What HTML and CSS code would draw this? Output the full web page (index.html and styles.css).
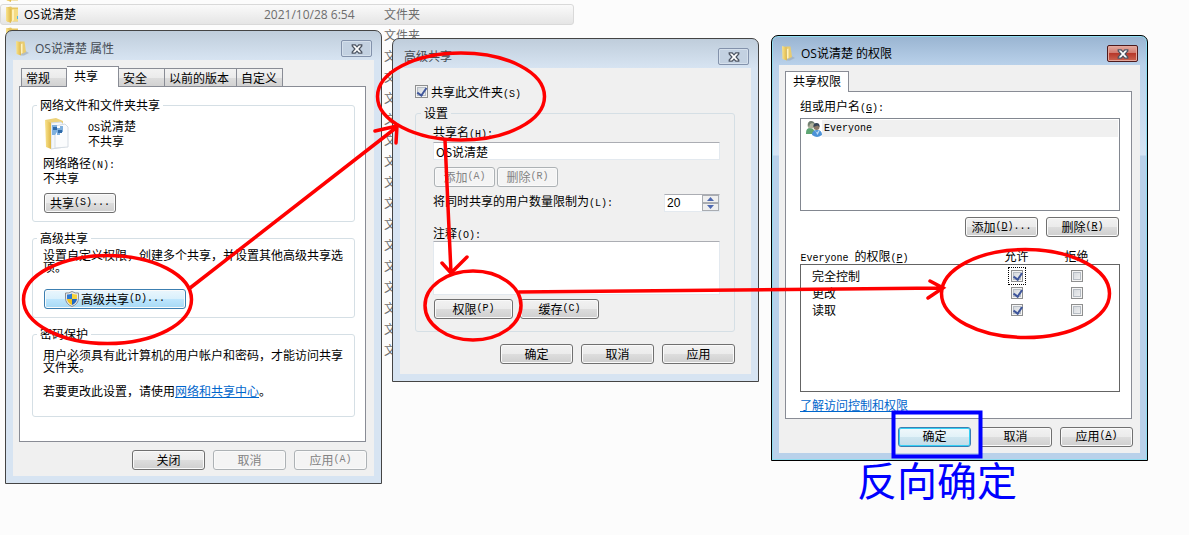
FILE: index.html
```
<!DOCTYPE html>
<html lang="zh-CN">
  <head>
    <meta charset="UTF-8" />
    <meta name="viewport" content="width=device-width, initial-scale=1.0" />
    <title>OS说清楚 共享</title>
    <link rel="stylesheet" href="styles.css">
  </head>
  <body>
    <!-- 图标定义 -->
    <svg class="defs" width="0" height="0">
      <defs>
        <linearGradient id="gold" x1="0" x2="1">
          <stop offset="0" stop-color="#f9e48f" />
          <stop offset="1" stop-color="#dfb645" />
        </linearGradient>
        <symbol id="folder" viewBox="0 0 14 17">
          <path d="M1 1.5l5-1 1 1h6v14H2z" fill="#e6c560" />
          <path d="M7 3h6v12H7z" fill="#f5dc83" />
          <path d="M1 1.5L6 3v14l-5-2z" fill="url(#gold)" />
          <path d="M7 4l2-.5V14l-2 2z" fill="#fff1ba" />
          <path d="M12 10h1v3h-1z" fill="#55b5e5" />
        </symbol>
        <symbol id="folder-small" viewBox="0 0 14 16">
          <path d="M7 9l7 4-5 2.500H6z" fill="#9aa7b3" opacity=".6" />
          <path d="M5 1.500h4.500L11 12l-4 2z" fill="#e9cc70" />
          <path d="M1 1l4.500 1L6 15.500 1.500 14z" fill="url(#gold)" />
          <path d="M6 4l1.500-.5v9L6 14z" fill="#fff3c0" />
        </symbol>
        <symbol id="cross" viewBox="1 1 10 8">
          <path d="M2 1.500h2.500L6 3.200l1.500-1.700H10v1L7.700 5 10 7.500v1H7.500L6 6.800 4.500 8.500H2v-1L4.300 5 2 2.500z" fill="#fff" stroke="#4a5260" />
        </symbol>
      </defs>
    </svg>

    <div class="desktop">
      <!-- 资源管理器文件列表 -->
      <ul class="files">
        <li><svg><use href="#folder" /></svg></li>
        <li class="selected"><svg><use href="#folder" /></svg><span class="name">OS说清楚</span><span class="date">2021/10/28 6:54</span><span>文件夹</span></li>
        <li><svg><use href="#folder" /></svg><span class="name"></span><span class="date"></span><span>文件夹</span></li>
        <li><span class="name"></span><span class="date"></span><span>文件夹</span></li>
        <li><span class="name"></span><span class="date"></span><span>文件夹</span></li>
        <li><span class="name"></span><span class="date"></span><span>文件夹</span></li>
        <li><span class="name"></span><span class="date"></span><span>文件夹</span></li>
        <li><span class="name"></span><span class="date"></span><span>文件夹</span></li>
        <li><span class="name"></span><span class="date"></span><span>文件夹</span></li>
        <li><span class="name"></span><span class="date"></span><span>文件夹</span></li>
        <li><span class="name"></span><span class="date"></span><span>文件夹</span></li>
        <li><span class="name"></span><span class="date"></span><span>文件夹</span></li>
        <li><span class="name"></span><span class="date"></span><span>文件夹</span></li>
        <li><span class="name"></span><span class="date"></span><span>文件夹</span></li>
        <li><span class="name"></span><span class="date"></span><span>文件夹</span></li>
        <li><span class="name"></span><span class="date"></span><span>文件夹</span></li>
        <li><span class="name"></span><span class="date"></span><span>文件夹</span></li>
        <li><span class="name"></span><span class="date"></span><span>文件夹</span></li>
      </ul>

      <!-- 属性窗口 -->
      <section class="window win-props">
        <header class="titlebar">
          <svg class="title-icon"><use href="#folder-small" /></svg>
          <h2>OS说清楚 属性</h2>
          <button class="close" aria-label="关闭窗口"><svg><use href="#cross" /></svg></button>
        </header>
        <div class="content">
          <nav class="tabs">
            <button>常规</button>
            <button class="active">共享</button>
            <button>安全</button>
            <button class="wide">以前的版本</button>
            <button>自定义</button>
          </nav>
          <div class="panel">
            <fieldset class="network">
              <legend>网络文件和文件夹共享</legend>
              <div class="folder-info">
                <svg viewBox="0 0 26 32">
                  <path d="M1 2l11-2 7 3v24H4z" fill="#ecd27a" />
                  <path d="M7 5l10-1 4 4v21L7 31z" fill="#f4f7fa" stroke="#d3dbe2" />
                  <path d="M11 8l10-2 3 3v20l-13 1z" fill="#fbfcfd" stroke="#d5dce3" />
                  <path d="M8 7h5v3h3v-2h3v6h-3v3h-3v-3l-2 3H8z" fill="#7fb0de" />
                  <path d="M9 9h4v3H9zM14 12h4v3h-4z" fill="#2f6aa8" />
                  <path d="M1 2l6 3v26l-5-2z" fill="url(#gold)" />
                </svg>
                <p><span class="ascii">OS</span>说清楚<br />不共享</p>
              </div>
              <p>网络路径<span class="ascii">(N):</span><br />不共享</p>
              <button class="btn">共享<span class="ascii">(S)...</span></button>
            </fieldset>
            <fieldset class="advanced">
              <legend>高级共享</legend>
              <p class="dense">设置自定义权限，创建多个共享，并设置其他高级共享选项。</p>
              <button class="btn hot">
                <svg viewBox="0 0 14 16">
                  <path d="M7 .5Q10 2.500 13.500 2v5q0 6-6.500 8.500Q.5 13 .5 7V2Q4 2.500 7 .5z" fill="#e8eaec" stroke="#8b8f95" />
                  <path d="M7 2.500V8H2V3.500q3 .2 5-1z" fill="#2c79d1" />
                  <path d="M7 2.500V8h5V3.500q-3 .2-5-1z" fill="#f6d23a" />
                  <path d="M7 8v6Q2.500 12 2 8z" fill="#f3c51e" />
                  <path d="M7 8v6q4.500-2 5-6z" fill="#2167be" />
                </svg>高级共享<span class="ascii">(D)...</span></button>
            </fieldset>
            <fieldset class="password">
              <legend>密码保护</legend>
              <p class="dense">用户必须具有此计算机的用户帐户和密码，才能访问共享文件夹。</p>
              <p class="dense">若要更改此设置，请使用<a href="#">网络和共享中心</a>。</p>
            </fieldset>
          </div>
          <footer class="actions">
            <button class="btn">关闭</button>
            <button class="btn" disabled>取消</button>
            <button class="btn" disabled>应用<span class="ascii">(A)</span></button>
          </footer>
        </div>
      </section>

      <!-- 高级共享窗口 -->
      <section class="window win-advanced">
        <header class="titlebar">
          <h2>高级共享</h2>
          <button class="close" aria-label="关闭窗口"><svg><use href="#cross" /></svg></button>
        </header>
        <div class="content">
          <div class="share-check">
            <input type="checkbox" id="share" checked />
            <label for="share">共享此文件夹<span class="ascii">(S)</span></label>
          </div>
          <fieldset>
            <legend>设置</legend>
            <label for="share-name">共享名<span class="ascii">(H):</span></label>
            <input type="text" id="share-name" value="OS说清楚" />
            <div class="name-buttons">
              <button class="btn" disabled>添加<span class="ascii">(A)</span></button>
              <button class="btn" disabled>删除<span class="ascii">(R)</span></button>
            </div>
            <div class="limit">
              <label for="limit">将同时共享的用户数量限制为<span class="ascii">(L):</span></label>
              <div class="spinner">
                <input type="text" id="limit" value="20" />
                <div class="arrows">
                  <button aria-label="增加"><svg viewBox="0 0 7 4"><path d="M0 4l3.500-4L7 4z" /></svg></button>
                  <button aria-label="减少"><svg viewBox="0 0 7 4"><path d="M0 0l3.500 4L7 0z" /></svg></button>
                </div>
              </div>
            </div>
            <label for="comment">注释<span class="ascii">(O):</span></label>
            <textarea id="comment"></textarea>
            <div class="perm-buttons">
              <button class="btn">权限<span class="ascii">(P)</span></button>
              <button class="btn">缓存<span class="ascii">(C)</span></button>
            </div>
          </fieldset>
          <footer class="actions">
            <button class="btn">确定</button>
            <button class="btn">取消</button>
            <button class="btn">应用</button>
          </footer>
        </div>
      </section>

      <!-- 权限窗口 -->
      <section class="window win-perms">
        <header class="titlebar">
          <svg class="title-icon"><use href="#folder-small" /></svg>
          <h2>OS说清楚 的权限</h2>
          <button class="close" aria-label="关闭窗口"><svg><use href="#cross" /></svg></button>
        </header>
        <div class="content">
          <nav class="tabs">
            <button class="active">共享权限</button>
          </nav>
          <div class="panel">
            <p>组或用户名<span class="ascii">(<u>G</u>):</span></p>
            <ul class="users">
              <li>
                <svg viewBox="0 0 16 16">
                  <path d="M0 12q0-5 4-5t5 5l-3 1H0z" fill="#5da573" />
                  <circle cx="5" cy="4" r="3.500" fill="#b0b39d" />
                  <path d="M2 4q0-4 3-4t4 3l-3-1-2 1-1 3z" fill="#6f7d70" />
                  <path d="M6 14q0-5 5-5t5 5q-3 2-5 2t-5-2z" fill="#4b92d8" />
                  <circle cx="10.500" cy="6" r="3" fill="#8b7967" />
                  <path d="M7.500 6q-.5-4 3-4t3 4l-2-1.500z" fill="#384657" />
                  <path d="M9 9.500l2 2 1.500-2 1 .5-2 4z" fill="#bddcf6" />
                </svg>
                <span class="ascii">Everyone</span>
              </li>
            </ul>
            <div class="actions">
              <button class="btn">添加<span class="ascii">(<u>D</u>)...</span></button>
              <button class="btn">删除<span class="ascii">(<u>R</u>)</span></button>
            </div>
            <table>
              <thead>
                <tr><th><span class="ascii">Everyone </span>的权限<span class="ascii">(<u>P</u>)</span></th><th>允许</th><th>拒绝</th><th></th></tr>
              </thead>
              <tbody>
                <tr><td>完全控制</td><td><input type="checkbox" class="focused" aria-label="完全控制 允许" checked /></td><td><input type="checkbox" aria-label="完全控制 拒绝" /></td><td></td></tr>
                <tr><td>更改</td><td><input type="checkbox" aria-label="更改 允许" checked /></td><td><input type="checkbox" aria-label="更改 拒绝" /></td><td></td></tr>
                <tr><td>读取</td><td><input type="checkbox" aria-label="读取 允许" checked /></td><td><input type="checkbox" aria-label="读取 拒绝" /></td><td></td></tr>
                <tr class="rest"><td colspan="4"></td></tr>
              </tbody>
            </table>
            <a href="#">了解访问控制和权限</a>
          </div>
          <footer class="actions">
            <button class="btn default">确定</button>
            <button class="btn">取消</button>
            <button class="btn">应用<span class="ascii">(<u>A</u>)</span></button>
          </footer>
        </div>
      </section>

      <!-- 步骤标注 -->
      <svg class="marks" width="1189" height="535">
        <g fill="none" stroke="#f00" stroke-width="3.500" stroke-linecap="round">
          <ellipse cx="107.500" cy="299.500" rx="84" ry="44" />
          <ellipse cx="461" cy="96.500" rx="83.500" ry="43.500" />
          <ellipse cx="473" cy="305.500" rx="48" ry="34.500" />
          <ellipse cx="1025.500" cy="293.500" rx="84" ry="44" />
          <path d="M190 288L397 127M375 131l22-5-1 17" />
          <path d="M445 140l6 133M442 263l9 10 16-16" />
          <path d="M519 292l424-4M930 281l13 7-15 10" />
        </g>
        <rect x="893.500" y="412.500" width="87" height="44" fill="none" stroke="#00f" stroke-width="4" />
      </svg>
      <p class="note">反向确定</p>
    </div>
  </body>
</html>
```
FILE: styles.css
```
* {
  box-sizing: border-box;
}

body {
  margin: 0;
  font-family: "Noto Sans CJK SC", sans-serif;
  font-size: 12px;
  line-height: 15px;
  color: #000;
  background-color: #fcfcfc;
}

h2,
p,
ul,
fieldset {
  margin: 0;
  padding: 0;
}

ul {
  list-style: none;
}

button,
input,
textarea {
  margin: 0;
  padding: 0;
  font: inherit;
  color: inherit;
}

a {
  color: #0066cc;
}

.defs {
  position: absolute;
}

.desktop {
  position: relative;
  min-height: 100vh;
  overflow: hidden;
}

/* 半角字符，不撑高所在行 */
.ascii {
  font-family: "Liberation Mono", monospace;
  font-size: 10px;
  line-height: 0;
  white-space: pre;
}

/* 文件列表 */
.files {
  width: 574px;
  margin-top: -17px;
  font-family: "Open Sans", "Noto Sans CJK SC", sans-serif;
  color: #6d6d6d;
}

.files li {
  display: flex;
  align-items: center;
  height: 21px;
  padding-left: 4px;
  border: 1px solid transparent;
}

.files li.selected {
  border-color: #d9d9d9;
  border-radius: 3px;
  background: linear-gradient(#fafafa, #e5e5e5);
}

.files svg {
  width: 14px;
  height: 17px;
  margin-right: -14px;
}

.files .name {
  width: 259px;
  padding-left: 19px;
  color: #000;
}

.files .date {
  width: 120px;
}

/* 窗口 */
.window {
  position: absolute;
  padding: 0 7px 7px;
  border: 1px solid #444;
  border-radius: 7px 7px 0 0;
  background: linear-gradient(#bfcddb, #d7e4f2 29px);
}

.win-props {
  left: 5px;
  top: 30px;
  width: 377px;
}

.win-advanced {
  left: 392px;
  top: 38px;
  width: 367px;
}

.win-perms {
  left: 771px;
  top: 35px;
  width: 377px;
  border-color: #000;
  background: linear-gradient(#99b4d1, #b9d1ea 29px, #d5e4f4 119px, #b9d1ea 120px);
  box-shadow: inset 0 0 0 1px #8fdcf0;
}

.titlebar {
  display: flex;
  height: 29px;
  padding: 9px 2px 0;
}

.title-icon {
  width: 14px;
  height: 16px;
  margin-right: 6px;
}

.titlebar h2 {
  flex: 1;
  font-family: "Open Sans", "Noto Sans CJK SC", sans-serif;
  font-size: 12px;
  font-weight: normal;
  line-height: 17px;
  color: #444b54;
}

.win-perms h2 {
  color: #000;
}

.close {
  display: flex;
  align-items: center;
  justify-content: center;
  width: 31px;
  height: 17px;
  border: 1px solid #8392ab;
  border-radius: 2px;
  background-color: #c3d1e1;
  box-shadow: inset 0 0 0 1px #d5e0ec;
}

.close svg {
  width: 12px;
  height: 10px;
}

.win-perms .close {
  border-color: #4d1a1c;
  background: linear-gradient(#e3aa9f, #d0766a 50%, #b7382a 50%, #cb6450);
  box-shadow: inset 0 0 0 1px #e4a79c;
}

.content {
  padding: 6px 7px 6px 6px;
  background-color: #f0f0f0;
}

/* 选项卡 */
.tabs {
  display: flex;
  align-items: flex-end;
  height: 21px;
  padding-left: 2px;
  margin-bottom: -1px;
}

.tabs button {
  width: 46px;
  height: 19px;
  padding: 0 4px;
  border: 1px solid #898c95;
  border-left-width: 0;
  background: linear-gradient(#f2f2f2, #ebebeb 50%, #dddddd 50%, #d2d2d2);
  text-align: left;
  white-space: nowrap;
}

.tabs button:first-child {
  border-left-width: 1px;
}

.tabs .wide {
  width: 72px;
}

.tabs .active {
  position: relative;
  width: 52px;
  height: 21px;
  padding: 0 7px 3px;
  border-bottom: 0;
  background: #fff;
}

.panel {
  margin-right: 1px;
  padding: 11px 10px 24px 12px;
  border: 1px solid #898c95;
  background-color: #fff;
}

fieldset {
  min-width: 0;
  border: 1px solid #d5dfe5;
  border-radius: 3px;
}

legend {
  margin-left: -6px;
  padding: 0 3px;
  line-height: 14px;
}

.panel fieldset {
  margin-bottom: 9px;
  padding: 0 10px;
}

.panel fieldset:last-child {
  margin-bottom: 0;
}

.network {
  height: 124px;
}

.advanced {
  height: 87px;
}

.password {
  height: 90px;
}

.folder-info {
  display: flex;
  gap: 18px;
  margin: 6px 0 5px 1px;
}

.folder-info svg {
  width: 26px;
  height: 32px;
}

.network .btn {
  width: 72px;
  margin: 8px 0 0 1px;
}

.dense {
  margin-top: 4px;
  line-height: 12px;
}

.password .dense {
  margin: 8px 0 12px;
}

.advanced .btn {
  width: 142px;
  margin: 16px 0 0 1px;
}

/* 按钮 */
.btn {
  display: flex;
  align-items: center;
  justify-content: center;
  width: 73px;
  height: 20px;
  padding-bottom: 1px;
  border: 1px solid #707070;
  border-radius: 3px;
  background: linear-gradient(#f2f2f2, #ebebeb 50%, #dddddd 50%, #cfcfcf);
  box-shadow: inset 0 0 0 1px #fafafa;
  line-height: 16px;
  white-space: nowrap;
}

.btn .ascii {
  line-height: 18px;
}

.btn svg {
  width: 14px;
  height: 16px;
  margin-right: 2px;
}

.btn:disabled {
  border-color: #adb2b5;
  background: #f4f4f4;
  color: #838383;
}

.btn.hot {
  border-color: #3c7fb1;
  background: linear-gradient(#eaf6fd, #d9f0fc 50%, #bee6fd 50%, #a7d9f5);
}

.btn.default {
  border-color: #3c7fb1;
  background: linear-gradient(#f0f8fb, #e2f2f8 50%, #cfe6f0 50%, #c2dce8);
  box-shadow: inset 0 0 0 1px #35d0f5;
}

.actions {
  display: flex;
  justify-content: flex-end;
  gap: 8px;
  margin-top: 8px;
}

/* 复选框 */
input[type="checkbox"] {
  appearance: none;
  display: block;
  flex: none;
  position: relative;
  width: 13px;
  height: 13px;
  border: 1px solid #8e8f8f;
  background: linear-gradient(135deg, #cdd2d8, #f6f6f6);
  box-shadow: inset 0 0 0 1px #f4f4f4, inset 0 0 0 2px #b6bcc3;
}

input[type="checkbox"]:checked::before {
  content: "";
  position: absolute;
  left: 3px;
  top: 0;
  width: 4px;
  height: 8px;
  border: solid #3f569b;
  border-width: 0 2px 2px 0;
  transform: rotate(35deg);
}

/* 高级共享 */
.win-advanced .titlebar {
  padding-left: 4px;
}

.win-advanced .content {
  padding: 16px 16px 10px 15px;
}

.share-check {
  display: flex;
  align-items: center;
  gap: 3px;
  height: 15px;
  margin-bottom: 7px;
}

.win-advanced fieldset {
  height: 226px;
  padding: 0 14px 0 17px;
}

.win-advanced legend {
  margin-left: -12px;
}

.win-advanced fieldset > label {
  display: block;
  margin-top: 4px;
}

input[type="text"],
textarea {
  display: block;
  width: 100%;
  height: 18px;
  padding: 0 2px;
  border: 1px solid #e3e9ef;
  border-top-color: #abadb3;
  background-color: #fff;
}

#share-name {
  margin-top: 3px;
}

.name-buttons,
.perm-buttons {
  display: flex;
  gap: 2px;
  margin: 7px 0 0 1px;
}

.name-buttons .btn {
  width: 61px;
}

.limit {
  display: flex;
  justify-content: space-between;
  height: 32px;
  margin-top: 6px;
}

.spinner {
  display: flex;
  width: 56px;
  height: 18px;
  margin-top: 1px;
  border: 1px solid #e3e9ef;
  border-top-color: #abadb3;
}

#limit {
  flex: 1;
  width: 0;
  height: 16px;
  border: 0;
  font-family: "Liberation Sans", sans-serif;
}

.arrows {
  width: 17px;
}

.arrows button {
  display: flex;
  align-items: center;
  justify-content: center;
  width: 17px;
  height: 8px;
  border: 1px solid #a9acb1;
  background-color: #efefef;
}

.arrows svg {
  width: 7px;
  height: 4px;
  fill: #4d68b0;
}

.win-advanced fieldset > label[for="comment"] {
  margin-top: 0;
}

textarea {
  height: 54px;
  margin-top: 1px;
  resize: none;
}

.perm-buttons {
  gap: 7px;
  margin-top: 4px;
}

.perm-buttons .btn {
  width: 79px;
}

.win-advanced .actions {
  margin-top: 12px;
}

/* 权限 */
.win-perms .tabs {
  padding-left: 0;
}

.win-perms .tabs .active {
  width: 64px;
}

.win-perms .panel {
  padding: 6px 11px 6px 14px;
}

.users {
  height: 93px;
  margin-top: 5px;
  padding: 1px;
  border: 1px solid #828790;
}

.users li {
  display: flex;
  align-items: center;
  gap: 2px;
  height: 17px;
  padding-left: 4px;
  background: linear-gradient(#f0f0f0, #f0f0f0) 20px 0 no-repeat;
}

.users svg {
  width: 16px;
  height: 16px;
}

.win-perms .panel .actions {
  margin: 6px 1px 10px 0;
}

table {
  width: 100%;
  border-collapse: collapse;
  table-layout: fixed;
}

th,
td {
  width: 60px;
  height: 17px;
  padding: 0;
  font-weight: normal;
  text-align: center;
}

th:first-child {
  width: auto;
  text-align: left;
}

td:first-child {
  padding-left: 11px;
  text-align: left;
}

th:last-child {
  width: 13px;
}

tbody {
  border: 1px solid #646464;
}

tbody tr:first-child td {
  height: 20px;
  padding-top: 3px;
}

.rest td {
  height: 73px;
}

table input[type="checkbox"] {
  width: 12px;
  height: 12px;
  margin: 0 auto;
}

table input[type="checkbox"]:checked::before {
  height: 7px;
}

.focused {
  outline: 1px dotted #000;
  outline-offset: 2px;
}

.win-perms .panel > a {
  display: block;
  width: max-content;
  margin-top: 5px;
}

/* 标注 */
.marks {
  position: absolute;
  left: 0;
  top: 0;
  pointer-events: none;
}

.note {
  position: absolute;
  left: 857px;
  top: 456px;
  font-size: 40px;
  line-height: 46px;
  color: #00f;
}
```
